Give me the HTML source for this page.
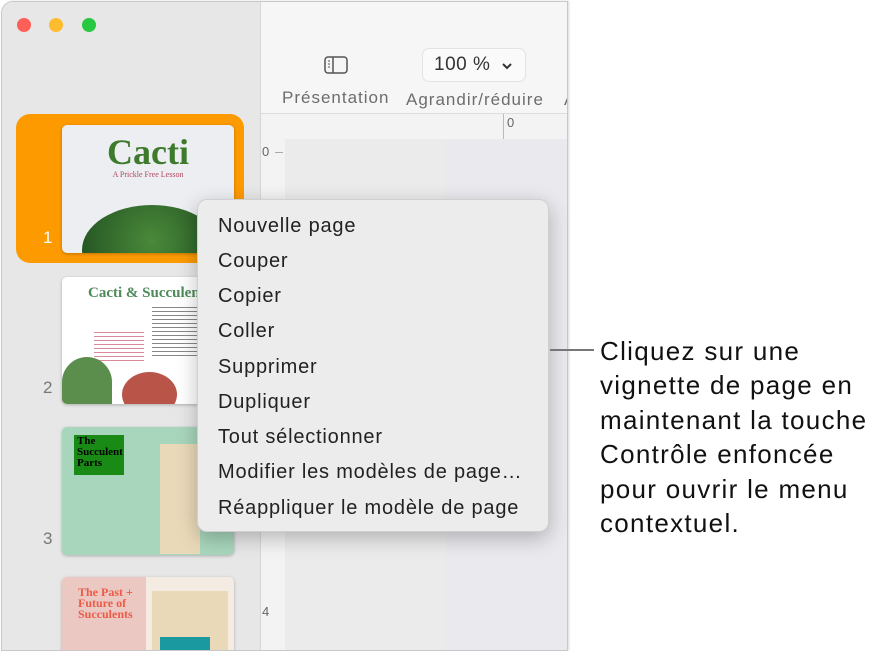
<!DOCTYPE html>
<html><head><meta charset="utf-8"><style>
*{margin:0;padding:0;box-sizing:border-box}
body{width:892px;height:646px;background:#fff;position:relative;overflow:hidden;font-family:"Liberation Sans",sans-serif}
.abs{position:absolute}
.win{left:1px;top:1px;width:567px;height:650px;border:1px solid #c8c8c8;border-radius:12px 0 0 0;overflow:hidden;background:#f5f5f5;box-shadow:1px 0 2px rgba(0,0,0,.15)}
.side{left:0;top:0;width:259px;height:650px;background:#e7e7e7;border-right:1px solid #d6d6d6}
.dot{width:14px;height:14px;border-radius:50%;top:16px}
.thumb{left:60px;width:172px;border-radius:5px;overflow:hidden;box-shadow:0 1px 3px rgba(0,0,0,.25)}
.num{font-size:17px;color:#777;left:41px}
.menu{left:197px;top:199px;width:352px;height:333px;background:#ececec;border-radius:10px;border:1px solid #d0d0d0;box-shadow:0 6px 20px rgba(0,0,0,.25)}
.menu div{position:absolute;left:20px;font-size:20px;letter-spacing:0.8px;color:#222;white-space:nowrap}
.tb{color:#6d6d6d;font-size:17px;letter-spacing:1px;white-space:nowrap}
.call{left:600px;top:334px;font-size:26px;letter-spacing:1.3px;line-height:34.4px;color:#111;white-space:nowrap}
</style></head><body>
<div class="abs win">
 <div class="abs" style="left:258px;top:0;width:310px;height:112px;background:#f6f6f6;border-bottom:1px solid #dcdcdc"></div>
 <div class="abs" style="left:258px;top:112px;width:310px;height:540px;background:#f3f3f3"></div>
 <div class="abs" style="left:283px;top:137px;width:161px;height:520px;background:#ebebeb"></div>
 <div class="abs" style="left:444px;top:137px;width:124px;height:520px;background:#e9e9ee"></div>
 <div class="abs" style="left:501px;top:112px;width:1px;height:25px;background:#bbb"></div>
 <div class="abs" style="left:505px;top:113px;font-size:13px;color:#666">0</div>
 <div class="abs" style="left:260px;top:142px;font-size:13px;color:#666">0</div>
 <div class="abs" style="left:260px;top:602px;font-size:13px;color:#666">4</div>
 <div class="abs" style="left:273px;top:150px;width:8px;height:1px;background:#aaa"></div>
 <svg class="abs" style="left:321px;top:53px" width="26" height="20"><rect x="2" y="2" width="22" height="16" rx="3" fill="none" stroke="#555" stroke-width="1.5"/><line x1="10" y1="2" x2="10" y2="18" stroke="#555" stroke-width="1.5"/><line x1="5" y1="6" x2="7" y2="6" stroke="#555"/><line x1="5" y1="9" x2="7" y2="9" stroke="#555"/><line x1="5" y1="12" x2="7" y2="12" stroke="#555"/></svg>
 <div class="abs tb" style="left:280px;top:86px">Présentation</div>
 <div class="abs" style="left:420px;top:46px;width:104px;height:34px;border:1px solid #e3e3e3;border-radius:7px;background:#fafafa"></div>
 <div class="abs" style="left:432px;top:52px;font-size:19px;letter-spacing:0.5px;color:#333">100 %</div>
 <svg class="abs" style="left:499px;top:59px" width="12" height="10"><path d="M2 3l4 4 4-4" fill="none" stroke="#333" stroke-width="2"/></svg>
 <div class="abs tb" style="left:404px;top:88px">Agrandir/réduire</div>
 <div class="abs tb" style="left:562px;top:88px">A</div>
 <div class="abs side">
  <div class="abs dot" style="left:15px;background:#fe5f57"></div>
  <div class="abs dot" style="left:47px;background:#febc2e"></div>
  <div class="abs dot" style="left:80px;background:#28c840"></div>
  <div class="abs" style="left:14px;top:112px;width:228px;height:149px;background:#fd9a00;border-radius:14px"></div>
  <div class="abs num" style="left:41px;top:226px;color:#fff">1</div>
  <div class="abs thumb" style="top:123px;height:128px;background:#eceef2">
   <div class="abs" style="left:0;right:0;top:6px;text-align:center;font:bold 36px 'Liberation Serif',serif;color:#3d7a2c">Cacti</div>
   <div class="abs" style="left:0;right:0;top:45px;text-align:center;font-size:8px;color:#b0455a;font-family:'Liberation Serif',serif">A Prickle Free Lesson</div>
   <div class="abs" style="left:20px;top:80px;width:140px;height:90px;border-radius:50%;background:radial-gradient(circle at 50% 40%,#4a8a3a,#1d4a1f)"></div>
  </div>
  <div class="abs num" style="top:376px">2</div>
  <div class="abs thumb" style="top:275px;height:127px;background:#fff">
   <div class="abs" style="left:26px;top:8px;font:bold 15px 'Liberation Serif',serif;color:#4e8a5a;white-space:nowrap">Cacti &amp; Succulents</div>
   <div class="abs" style="left:32px;top:55px;width:50px;height:30px;background:repeating-linear-gradient(#d98a9a 0 1px,transparent 1px 4px)"></div>
   <div class="abs" style="left:90px;top:30px;width:80px;height:50px;background:repeating-linear-gradient(#888 0 1px,transparent 1px 4px)"></div>
   <div class="abs" style="left:0;top:80px;width:50px;height:50px;background:#5b8d4c;border-radius:50% 50% 0 0"></div>
   <div class="abs" style="left:60px;top:95px;width:55px;height:45px;background:#b95548;border-radius:50%"></div>
  </div>
  <div class="abs num" style="top:527px">3</div>
  <div class="abs thumb" style="top:425px;height:128px;background:#a8d6bc">
   <div class="abs" style="left:12px;top:8px;width:50px;height:40px;background:#198a16"></div>
   <div class="abs" style="left:15px;top:9px;font:bold 11px/11px 'Liberation Serif',serif;color:#000">The<br>Succulent<br>Parts</div>
   <div class="abs" style="left:98px;top:17px;width:40px;height:110px;background:#ead9b9"></div>
  </div>
  <div class="abs thumb" style="top:575px;height:80px;background:#f4ece2">
   <div class="abs" style="left:0;top:0;width:84px;height:80px;background:#ecc8c2"></div>
   <div class="abs" style="left:16px;top:10px;font:bold 12px/11px 'Liberation Serif',serif;color:#ec5b47">The Past +<br>Future of<br>Succulents</div>
   <div class="abs" style="left:90px;top:14px;width:76px;height:70px;background:#ead9b9"></div>
   <div class="abs" style="left:98px;top:60px;width:50px;height:20px;background:#1a9aa0"></div>
  </div>
 </div>
</div>
<div class="abs menu">
 <div style="top:15px">Nouvelle page</div>
 <div style="top:50px">Couper</div>
 <div style="top:85px">Copier</div>
 <div style="top:120px">Coller</div>
 <div style="top:156px">Supprimer</div>
 <div style="top:191px">Dupliquer</div>
 <div style="top:226px">Tout sélectionner</div>
 <div style="top:261px">Modifier les modèles de page…</div>
 <div style="top:297px">Réappliquer le modèle de page</div>
</div>
<div class="abs" style="left:550px;top:349px;width:44px;height:1.5px;background:#777"></div>
<div class="abs call">Cliquez sur une<br>vignette de page en<br>maintenant la touche<br>Contrôle enfoncée<br>pour ouvrir le menu<br>contextuel.</div>
</body></html>
